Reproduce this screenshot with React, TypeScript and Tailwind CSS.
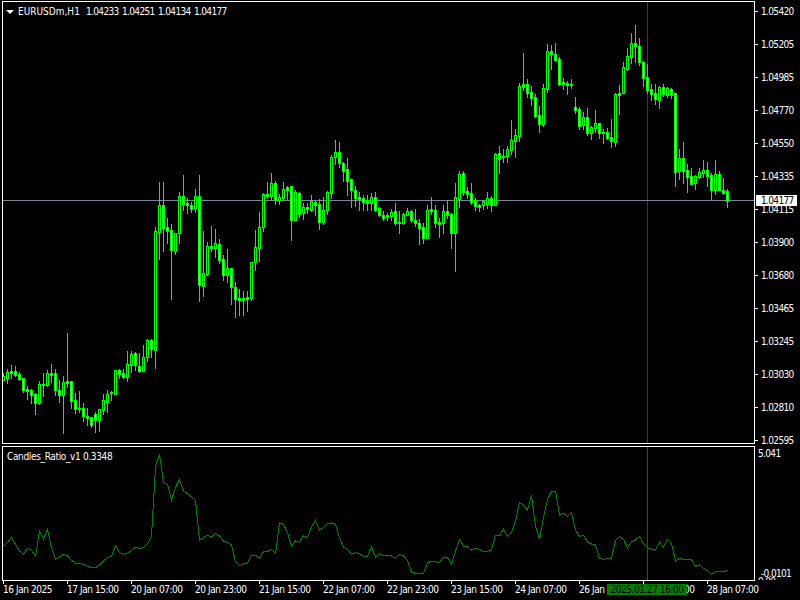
// MT4 chart: candles are stored as page pixels so the data can be compared with the screenshot directly
type Candle = [high: number, top: number, bottom: number, low: number, filled: 0 | 1];

const candles: Candle[] = [
  [373, 376, 380, 380, 0], [369, 372, 378, 383, 0], [365, 371, 373, 378, 1], [366, 371, 375, 376, 1],
  [372, 374, 379, 380, 1], [378, 378, 390, 392, 1], [386, 389, 391, 399, 1], [389, 390, 395, 403, 1],
  [393, 394, 403, 414, 1], [381, 384, 403, 404, 0], [373, 384, 385, 396, 1], [370, 373, 385, 386, 0],
  [364, 373, 375, 382, 1], [369, 373, 390, 395, 1], [380, 390, 395, 402, 1], [376, 382, 395, 433, 0],
  [333, 381, 383, 387, 1], [381, 381, 401, 408, 1], [393, 400, 409, 413, 1], [391, 408, 409, 412, 1],
  [403, 408, 416, 421, 1], [408, 416, 418, 425, 1], [417, 417, 425, 427, 1], [412, 414, 420, 432, 1],
  [409, 409, 420, 431, 0], [394, 400, 410, 414, 0], [390, 394, 402, 412, 0], [391, 392, 393, 400, 1],
  [370, 370, 394, 394, 0], [369, 370, 374, 378, 1], [369, 373, 377, 378, 1], [351, 364, 377, 381, 0],
  [351, 354, 365, 372, 0], [352, 353, 365, 370, 1], [353, 366, 371, 372, 1], [345, 357, 371, 371, 0],
  [339, 340, 357, 361, 0], [339, 340, 349, 357, 1], [227, 231, 350, 368, 0], [182, 205, 232, 259, 0],
  [182, 205, 228, 251, 1], [218, 227, 231, 243, 1], [224, 230, 250, 299, 1], [233, 233, 251, 254, 0],
  [192, 196, 233, 243, 0], [175, 196, 204, 210, 1], [198, 203, 205, 213, 1], [202, 205, 209, 212, 1],
  [189, 196, 208, 212, 0], [175, 196, 285, 301, 1], [231, 273, 286, 296, 0], [242, 246, 274, 275, 0],
  [226, 246, 248, 251, 1], [229, 243, 248, 257, 0], [239, 244, 260, 263, 1], [255, 259, 275, 280, 1],
  [249, 268, 275, 282, 0], [268, 268, 287, 304, 1], [282, 287, 299, 317, 1], [289, 298, 300, 315, 1],
  [291, 298, 300, 315, 1], [291, 297, 299, 311, 1], [262, 262, 298, 300, 0], [230, 247, 262, 270, 0],
  [212, 227, 248, 261, 0], [193, 194, 227, 231, 0], [182, 194, 196, 198, 1], [173, 183, 196, 199, 0],
  [181, 183, 200, 204, 1], [194, 197, 200, 204, 0], [182, 189, 198, 199, 0], [186, 187, 190, 199, 1],
  [186, 186, 220, 240, 1], [190, 192, 220, 220, 0], [192, 193, 214, 217, 1], [203, 207, 213, 219, 0],
  [203, 207, 209, 213, 1], [195, 201, 210, 211, 0], [200, 202, 205, 215, 1], [199, 204, 222, 229, 1],
  [197, 210, 222, 224, 0], [191, 192, 210, 214, 0], [155, 157, 193, 198, 0], [140, 152, 157, 164, 0],
  [142, 152, 163, 167, 1], [162, 163, 171, 181, 1], [158, 169, 181, 195, 1], [179, 179, 190, 207, 1],
  [186, 190, 198, 206, 1], [192, 197, 199, 210, 1], [195, 198, 202, 210, 1], [195, 200, 203, 210, 1],
  [193, 197, 203, 210, 0], [192, 197, 210, 211, 1], [207, 208, 215, 216, 1], [211, 215, 218, 220, 1],
  [213, 215, 217, 220, 1], [209, 212, 216, 220, 0], [203, 211, 223, 225, 1], [211, 222, 223, 233, 1],
  [213, 214, 223, 224, 0], [208, 211, 215, 215, 0], [210, 211, 220, 222, 1], [209, 220, 223, 226, 1],
  [219, 223, 228, 244, 1], [223, 227, 238, 243, 1], [205, 210, 238, 238, 0], [197, 209, 211, 214, 1],
  [205, 210, 223, 227, 1], [218, 222, 224, 237, 1], [205, 211, 223, 233, 0], [200, 211, 215, 218, 1],
  [213, 214, 233, 248, 1], [183, 197, 233, 271, 0], [171, 174, 199, 207, 0], [171, 173, 192, 195, 1],
  [187, 191, 194, 198, 1], [183, 193, 202, 204, 1], [198, 200, 206, 210, 1], [204, 205, 207, 211, 1],
  [200, 201, 205, 209, 0], [192, 198, 204, 208, 0], [196, 198, 205, 211, 1], [153, 154, 205, 205, 0],
  [146, 153, 159, 173, 1], [149, 156, 157, 162, 1], [146, 149, 156, 162, 0], [120, 140, 150, 154, 0],
  [129, 135, 141, 157, 0], [83, 86, 136, 141, 0], [53, 84, 87, 90, 1], [79, 84, 93, 97, 1],
  [86, 92, 98, 105, 1], [94, 97, 116, 117, 1], [106, 115, 124, 132, 1], [84, 88, 124, 126, 0],
  [44, 51, 89, 92, 0], [45, 51, 54, 69, 1], [43, 54, 60, 61, 1], [57, 59, 84, 85, 1],
  [78, 82, 84, 89, 1], [81, 83, 85, 94, 1], [79, 84, 85, 88, 1], [97, 107, 110, 113, 1],
  [107, 109, 126, 129, 1], [112, 117, 125, 129, 0], [108, 117, 133, 135, 1], [126, 127, 133, 139, 0],
  [110, 123, 128, 132, 0], [123, 123, 133, 138, 1], [129, 132, 133, 143, 1], [128, 132, 138, 139, 1],
  [119, 137, 141, 147, 1], [93, 94, 142, 146, 0], [85, 93, 95, 114, 1], [62, 67, 93, 93, 0],
  [48, 56, 69, 70, 0], [33, 43, 57, 63, 0], [25, 43, 46, 62, 1], [38, 46, 62, 65, 1],
  [61, 62, 78, 86, 1], [64, 77, 90, 93, 1], [84, 89, 94, 100, 1], [84, 93, 99, 104, 1],
  [86, 87, 100, 108, 0], [84, 87, 94, 96, 1], [87, 88, 95, 97, 0], [88, 89, 95, 98, 1],
  [93, 93, 172, 186, 1], [149, 158, 171, 179, 0], [142, 158, 171, 183, 1], [164, 170, 177, 192, 1],
  [168, 176, 184, 184, 1], [175, 176, 183, 189, 0], [168, 172, 177, 178, 0], [160, 170, 173, 177, 0],
  [162, 170, 176, 186, 1], [173, 175, 190, 199, 1], [160, 174, 190, 194, 0], [171, 174, 190, 190, 1],
  [178, 190, 193, 194, 1], [189, 191, 201, 207, 1],
];

// indicator values as read off the 3x crops: y = 440 + v / 3, one value per candle
const ratioA = [
  315, 305, 289, 310, 330, 340, 322, 328, 345, 270, 295, 265, 320, 355, 348, 340, 345, 358, 367, 367,
  370, 376, 380, 380, 372, 360, 350, 345, 314, 335, 340, 338, 328, 319, 322, 320, 308, 285, 78, 40,
  125, 130, 178, 140, 115, 150, 158, 167, 178, 298, 290, 283, 288, 278, 285, 300, 305, 312, 362, 374,
  368, 367, 343, 343, 352, 332, 332, 325, 338, 246, 250, 275, 316, 300, 303, 284, 290, 258, 238, 268,
  260, 248, 246, 250, 290, 318, 325, 340, 335, 338, 346, 346, 318, 349, 338, 345, 343, 345, 352, 340,
];
const ratioB = [
  345, 358, 393, 397, 397, 397, 365, 361, 363, 364, 349, 350, 370, 330, 296, 315, 318, 327, 322, 325,
  333, 331, 326, 284, 283, 265, 287, 275, 240, 185, 192, 208, 163, 255, 295, 230, 175, 152, 151, 222,
  217, 226, 214, 268, 286, 283, 303, 309, 312, 352, 355, 352, 352, 298, 287, 295, 320, 303, 297, 287,
  308, 320, 325, 327, 302, 318, 295, 308, 360, 352, 356, 356, 356, 376, 372, 382, 389, 400, 392, 392,
  392, 388,
];

const ratioPoints = [...ratioA, ...ratioB]
  .map((v, i) => `${3.5 + 4 * i},${440 + v / 3}`)
  .join(" ");

const priceLabels = [
  "1.05420", "1.05205", "1.04985", "1.04770", "1.04550", "1.04335", "1.04115",
  "1.03900", "1.03680", "1.03465", "1.03245", "1.03030", "1.02810", "1.02595",
];

const timeLabels = [
  "16 Jan 2025", "17 Jan 15:00", "20 Jan 07:00", "20 Jan 23:00", "21 Jan 15:00", "22 Jan 07:00",
  "22 Jan 23:00", "23 Jan 15:00", "24 Jan 07:00", "26 Jan 23:00", "27 Jan 15:00", "28 Jan 07:00",
];

const ohlc = ["1.04233", "1.04251", "1.04134", "1.04177"];

const GREEN = "#00ff00";

const CandleMark = ({ c, i }: { c: Candle; i: number }) => {
  const x = 3 + 4 * i;
  const [high, top, bottom, low, filled] = c;
  const h = bottom - top + 1;
  return (
    <g>
      <rect x={x} y={high} width={1} height={low - high + 1} fill={GREEN} />
      <rect x={x - 1} y={top} width={3} height={h} fill={GREEN} />
      {h > 2 && <rect x={x} y={top + 1} width={1} height={h - 2} fill={filled ? "#ffffff" : "#000000"} />}
    </g>
  );
};

export default function App() {
  return (
    <div className="relative h-[600px] w-[800px] overflow-hidden bg-black pt-[1px] font-['DejaVu_Sans_Condensed','Liberation_Sans',sans-serif] text-[10px] leading-[9px] tracking-[-0.65px] text-white">
      {/* price window */}
      <div className="flex">
        <div className="relative ml-[2px] h-[443px] w-[753px] border border-white">
          <svg width={751} height={441} viewBox="3 2 751 441" shapeRendering="crispEdges" className="block">
            <rect x={647} y={2} width={1} height={441} fill="#006400" />
            <rect x={3} y={200} width={751} height={1} fill="#778899" />
            {candles.map((c, i) => (
              <CandleMark key={i} c={c} i={i} />
            ))}
          </svg>
          <div className="absolute left-[3px] top-[5px] flex items-center">
            <svg width={8} height={4} viewBox="0 0 8 4" className="mr-[4px]">
              <polygon points="0,0 8,0 4,4" fill="#ffffff" />
            </svg>
            <span className="w-[68px] tracking-[0px]">EURUSDm,H1</span>
            <div className="flex gap-[3px]">
              {ohlc.map((v, i) => (
                <span key={i} className="w-[33px]">{v}</span>
              ))}
            </div>
          </div>
        </div>
        <div className="relative flex flex-1 flex-col gap-[24px] pt-[6px]">
          {priceLabels.map((p) => (
            <div key={p} className="flex h-[9px] items-center">
              <span className="h-px w-[3px] bg-white" />
              <span className="ml-[3px]">{p}</span>
            </div>
          ))}
          <div className="absolute left-[1px] top-[194px] flex h-[11px] w-[41px] items-center bg-white pl-[5px] text-black">
            1.04177
          </div>
        </div>
      </div>

      {/* indicator window */}
      <div className="mt-[1px] flex">
        <div className="relative ml-[2px] h-[135px] w-[753px] border border-white">
          <svg width={751} height={133} viewBox="3 446 751 133" className="block">
            <rect x={647} y={446} width={1} height={133} fill="#007000" shapeRendering="crispEdges" />
            <polyline points={ratioPoints} fill="none" stroke="#008000" strokeWidth={1} shapeRendering="crispEdges" />
          </svg>
          <div className="absolute left-[4px] top-[5px] tracking-[-0.35px]">Candles_Ratio_v1 0.3348</div>
        </div>
        <div className="flex flex-1 flex-col">
          <div className="ml-[3px] mt-[3px]">5.041</div>
          <div className="ml-[6px] mt-[111px]">-0.0101</div>
          <div className="ml-[3px] mt-[-1px] h-[3px] overflow-hidden leading-[9px]">0.00</div>
        </div>
      </div>

      {/* time axis */}
      <div className="relative flex pl-[3px] tracking-[-0.45px]">
        {timeLabels.map((t) => (
          <div key={t} className="w-[64px] shrink-0">
            <div className="h-[3px] w-px bg-white" />
            <div className="mt-[1px] whitespace-nowrap">{t}</div>
          </div>
        ))}
        <div className="absolute left-[607px] top-[3px] flex h-[11px] w-[80px] items-center justify-center bg-[#008000] text-black">
          2025.01.27 16:00
        </div>
      </div>
    </div>
  );
}
